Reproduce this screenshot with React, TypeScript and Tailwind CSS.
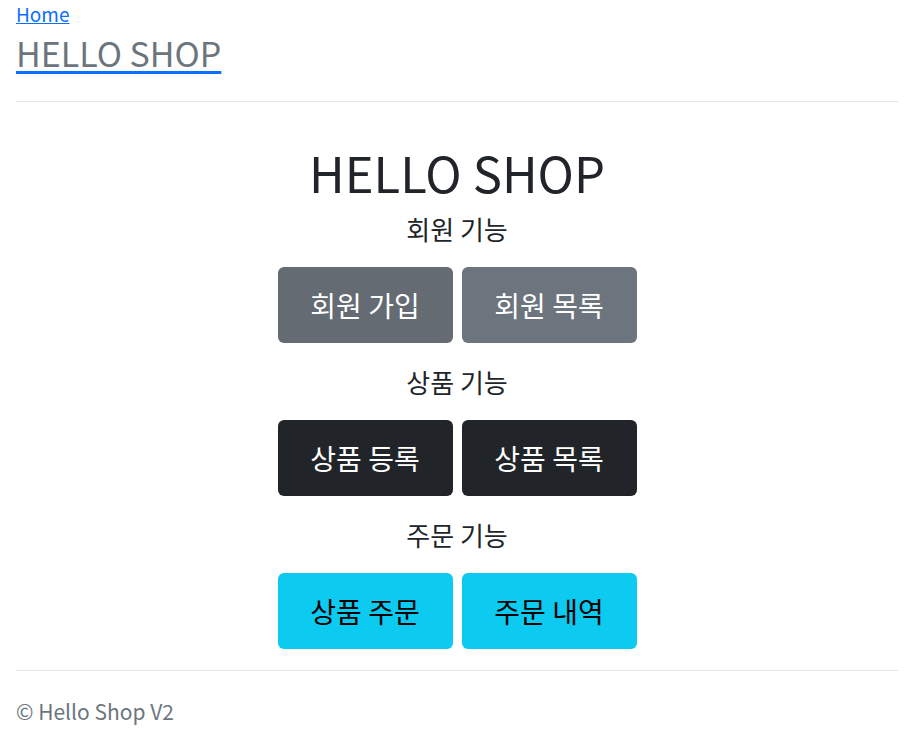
const font = "font-['Malgun_Gothic','Noto_Sans_CJK_KR',sans-serif]";

const sections = [
  { title: "회원 기능", buttons: ["회원 가입", "회원 목록"], style: ["bg-[#646b73] text-white", "bg-[#6c757d] text-white"] },
  { title: "상품 기능", buttons: ["상품 등록", "상품 목록"], style: ["bg-[#212529] text-white", "bg-[#212529] text-white"] },
  { title: "주문 기능", buttons: ["상품 주문", "주문 내역"], style: ["bg-[#0dcaf0] text-black", "bg-[#0dcaf0] text-black"] },
];

export default function App() {
  return (
    <div className={`${font} min-h-screen bg-white px-4 text-[#212529]`}>
      <header>
        <a href="#" className="block h-[27px] text-[19px] leading-[27px] text-[#0d6efd] underline">
          Home
        </a>
        <div className="pt-[4px] pb-[26px]">
          <a
            href="#"
            className="text-[34px] leading-[44px] text-[#6c757d] underline decoration-[#0d6efd] decoration-[3px] underline-offset-[4px]"
          >
            HELLO SHOP
          </a>
        </div>
        <hr className="border-t border-[#e5e5e5]" />
      </header>

      <main className="flex flex-col items-center pt-[41px] pb-[21px]">
        <h1 className="mb-[10px] text-[49px] leading-[58px] font-normal">HELLO SHOP</h1>
        {sections.map((s, idx) => (
          <div key={s.title} className={`flex flex-col items-center ${idx > 0 ? "mt-[21px]" : ""}`}>
            <p className="text-[26px] leading-[36px] text-[#212529]">{s.title}</p>
            <div className="mt-[20px] flex gap-[9px]">
              {s.buttons.map((b, i) => (
                <button
                  key={b}
                  className={`${s.style[i]} h-[76px] w-[175px] rounded-[6px] text-[28px]`}
                >
                  {b}
                </button>
              ))}
            </div>
          </div>
        ))}
      </main>

      <footer>
        <hr className="border-t border-[#e5e5e5]" />
        <p className="pt-[25px] text-[21px] leading-[30px] text-[#6c757d]">© Hello Shop V2</p>
      </footer>
    </div>
  );
}
